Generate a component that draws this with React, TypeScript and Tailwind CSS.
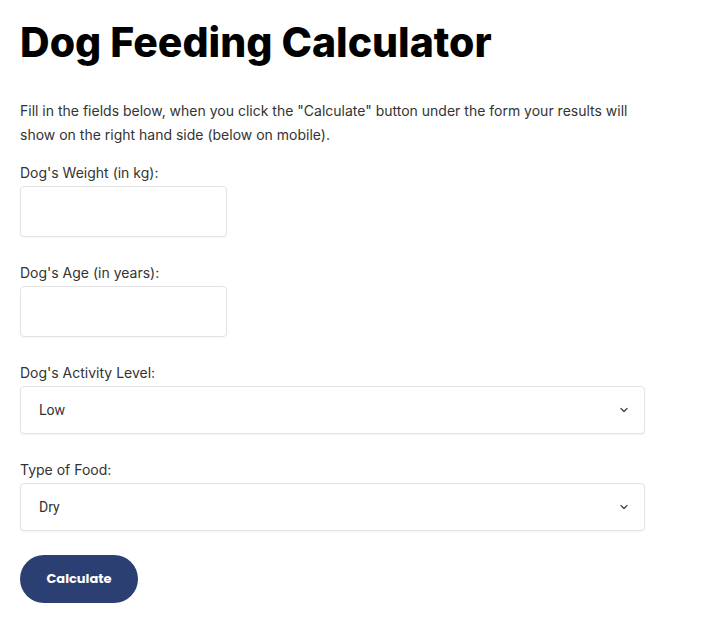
import { ChevronDown } from 'lucide-react';

const fields = [
  { label: "Dog's Weight (in kg):", type: 'input' },
  { label: "Dog's Age (in years):", type: 'input' },
  { label: "Dog's Activity Level:", type: 'select', value: 'Low' },
  { label: 'Type of Food:', type: 'select', value: 'Dry' },
];

export default function App() {
  return (
    <div className="min-h-screen bg-white px-5 pt-[16px] font-['Inter',sans-serif] text-[#222]">
      <h1 className="text-[41px] font-extrabold leading-[52px] text-black">Dog Feeding Calculator</h1>
      <p className="mt-[31px] max-w-[630px] text-[14px] leading-6 text-[#333]">
        Fill in the fields below, when you click the "Calculate" button under the form your results will show on the
        right hand side (below on mobile).
      </p>

      <form className="mt-[14px] w-[625px]">
        {fields.map((f) => (
          <div key={f.label} className="mb-[24px]">
            <label className="block text-[14px] leading-6 text-[#333]">{f.label}</label>
            {f.type === 'input' ? (
              <input
                type="text"
                className="mt-[1px] block h-[51px] w-[207px] rounded-[4px] border border-[#e3e3e3] bg-white shadow-[0_1px_2px_rgba(0,0,0,0.04)]"
              />
            ) : (
              <div className="mt-[1px] flex h-[48px] items-center justify-between rounded-[4px] border border-[#e3e3e3] bg-white pl-[18px] pr-[14px] font-['Roboto',sans-serif] text-[14px] text-[#333] shadow-[0_1px_2px_rgba(0,0,0,0.05)]">
                <span>{f.value}</span>
                <ChevronDown size={12} strokeWidth={2.5} className="text-[#444]" />
              </div>
            )}
          </div>
        ))}
        <button
          type="button"
          className="mt-0 h-[48px] w-[118px] rounded-full bg-[#2b3f72] font-['Poppins','Inter',sans-serif] text-[13px] font-bold text-white"
        >
          Calculate
        </button>
      </form>
    </div>
  );
}
